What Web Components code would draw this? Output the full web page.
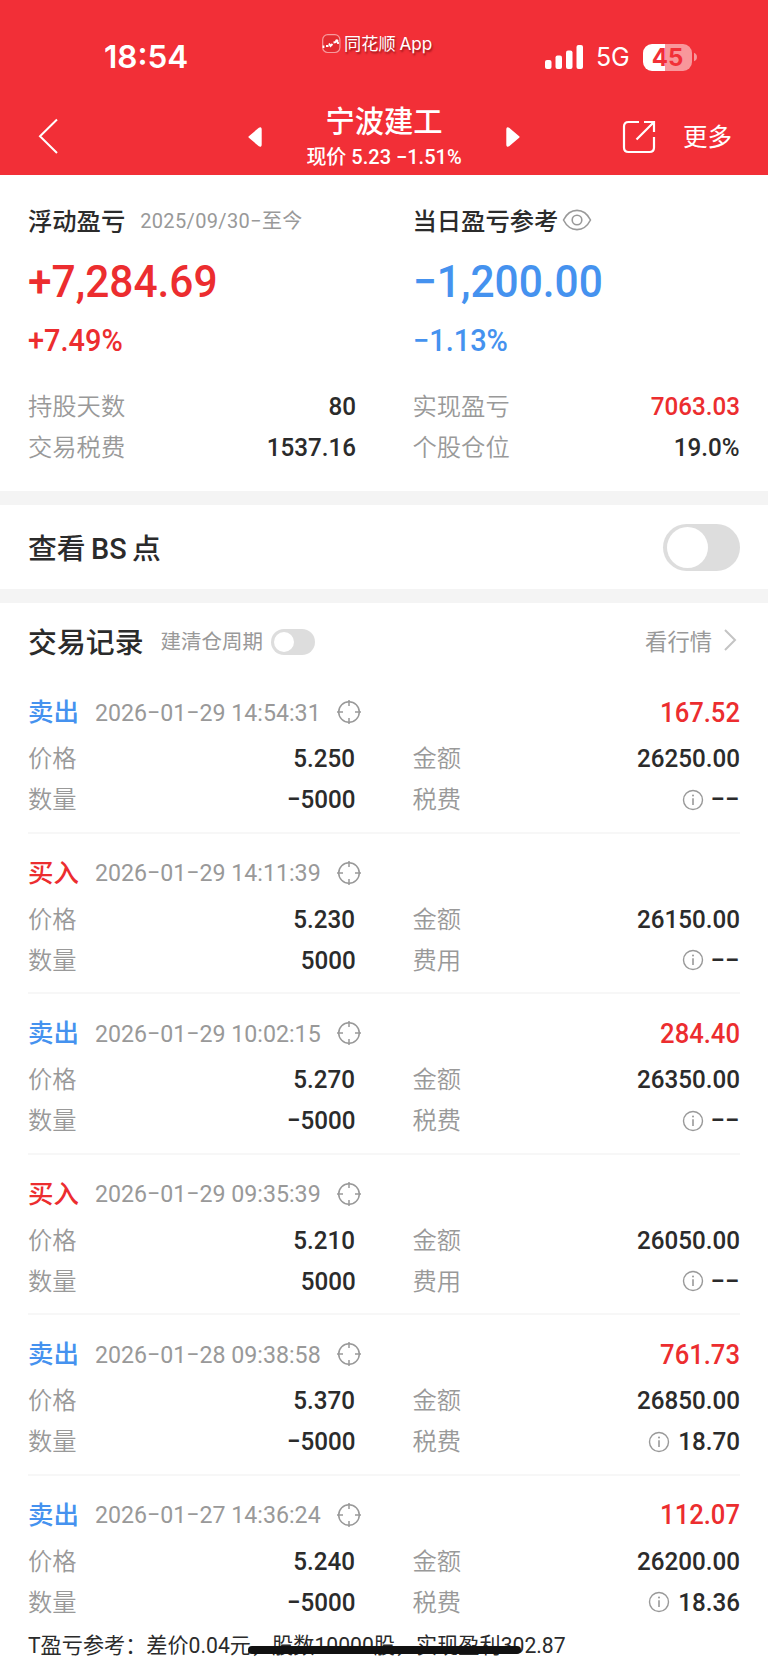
<!DOCTYPE html>
<html lang="zh-CN">
<head>
<meta charset="utf-8">
<meta name="viewport" content="width=device-width, initial-scale=1">
<title>宁波建工</title>
<style>
  body {
    margin: 0;
    background: #fff;
    color: #2b2b2b;
    font-family: Roboto, "Noto Sans CJK SC", sans-serif;
    --ink: #2b2b2b;
    --red: #ec2d2f;
    --blue: #4592ef;
    --gray: #999;
  }
</style>
</head>
<body>
<stock-page></stock-page>

<script>
class StatusBar extends HTMLElement {
    constructor() {
        super();
        this.attachShadow({ mode: 'open' });
        this.shadowRoot.innerHTML = `
        <style>
        :host {
            display: grid;
            grid-template-columns: 322px 1fr 223px;
            height: 94px;
            color: #fff;
            font-family: Inter, "Noto Sans CJK SC", sans-serif;
        }

        .time {
            padding: 39px 0 0 104px;
            font-size: 31.5px;
            line-height: 36px;
            font-weight: 600;
        }

        .app {
            display: flex;
            align-items: center;
            gap: 3px;
            height: 20px;
            margin-top: 34px;
            font-size: 17.2px;
            line-height: 20px;
            word-spacing: -1px;
            white-space: nowrap;
            text-shadow: 1px 2px 2px rgba(80,0,0,0.55);
        }

        .right {
            display: flex;
            align-items: center;
            height: 28px;
            margin-top: 43px;
        }

        .net {
            width: 47px;
            padding-left: 13px;
            box-sizing: border-box;
            font-size: 25px;
            line-height: 28px;
            letter-spacing: -0.3px;
        }

        .battery {
            margin-left: 13px;
            width: 49px;
            height: 27px;
            border-radius: 9px;
            background: linear-gradient(90deg, #fff 22px, #f8979b 22px);
            color: #f22f37;
            font-size: 24px;
            line-height: 27px;
            font-weight: 700;
            text-align: center;
        }
        </style>

        <div class="time">18:54</div>
        <div class="app">
            <svg width="19" height="20" viewBox="0 0 19 20">
                <rect x="0.7" y="0.7" width="17.2" height="17.8" rx="5" fill="#e32b31" stroke="#f79a9d" stroke-width="1.2"/>
                <path d="M1.5 11.5v2.5M4 12h2.500M7 9.500l1.500 2.500 2-2M11.500 8.500l2.500-.5M16 8v2" fill="none" stroke="#fff" stroke-width="1.8"/>
                <circle cx="14.8" cy="7" r="1.7" fill="#fff"/>
            </svg>
            <span>同花顺 App</span>
        </div>
        <div class="right">
            <svg width="38" height="24" viewBox="0 0 38 24" fill="#fff">
                <rect x="0" y="15" width="6.5" height="9" rx="2"/>
                <rect x="10.5" y="10.5" width="6.5" height="13.5" rx="2"/>
                <rect x="21" y="5.5" width="6.5" height="18.5" rx="2"/>
                <rect x="31.5" y="0" width="6.5" height="24" rx="2"/>
            </svg>
            <span class="net">5G</span>
            <span class="battery">45</span>
            <svg width="6" height="10" viewBox="0 0 6 10"><path d="M2 0.7a4.6 4.6 0 0 1 0 8.6z" fill="#f8979b"/></svg>
        </div>
        `;
    }
}

class NavBar extends HTMLElement {
    constructor() {
        super();
        this.attachShadow({ mode: 'open' });
        this.shadowRoot.innerHTML = `
        <style>
        :host {
            display: grid;
            grid-template-columns: 248px 272px 1fr;
            height: 81px;
            color: #fff;
        }

        .back {
            padding: 24px 0 0 38px;
        }

        .center {
            display: flex;
            justify-content: space-between;
        }

        .center svg {
            margin-top: 32px;
        }

        .title {
            text-align: center;
            white-space: nowrap;
        }

        h1 {
            margin: 10px 0 0;
            font-size: 29.3px;
            line-height: 36px;
            font-weight: 500;
        }

        .sub {
            font-size: 20px;
            line-height: 24px;
            margin-top: 5px;
            font-weight: 500;
        }

        .actions {
            display: flex;
            padding: 26px 0 0 102px;
        }

        .more {
            margin-left: 27px;
            font-size: 24.5px;
            line-height: 36px;
        }

        svg {
            display: block;
        }
        </style>

        <div class="back">
            <svg width="20" height="36" viewBox="0 0 20 36"><path d="M19 1.5L2 18.3 19 35" fill="none" stroke="#fff" stroke-width="2"/></svg>
        </div>
        <div class="center">
            <svg width="14" height="22" viewBox="0 0 14 22"><path d="M1.5 11L11.5 2.5Q12.7 1.7 12.7 3.5V18.5Q12.7 20.3 11.5 19.5Z" fill="#fff" stroke="#fff" stroke-width="2" stroke-linejoin="round"/></svg>
            <div class="title">
                <h1><slot name="title"></slot></h1>
                <div class="sub"><slot name="sub"></slot></div>
            </div>
            <svg width="14" height="22" viewBox="0 0 14 22"><path d="M12.5 11L2.5 2.5Q1.3 1.7 1.3 3.5V18.5Q1.3 20.3 2.5 19.5Z" fill="#fff" stroke="#fff" stroke-width="2" stroke-linejoin="round"/></svg>
        </div>
        <div class="actions">
            <svg width="34" height="34" viewBox="0 0 34 34" fill="none" stroke="#fff" stroke-width="2.2">
                <path d="M17 2H6.5Q2 2 2 6.5V27.5Q2 32 6.5 32H27.5Q32 32 32 27.5V17"/>
                <path d="M14.5 19.5L31.5 2.5M22 2H32V12"/>
            </svg>
            <span class="more">更多</span>
        </div>
        `;
    }
}

// <data-row label="..." info tone="red">value</data-row>
class DataRow extends HTMLElement {
    constructor() {
        super();
        this.attachShadow({ mode: 'open' });
    }

    connectedCallback() {
        const info = this.hasAttribute('info') ? `
            <svg width="22" height="22" viewBox="0 0 22 22" fill="none" stroke="#999">
                <circle cx="11" cy="11" r="9.5" stroke-width="1.4"/>
                <path d="M11 9.2V16" stroke-width="1.6"/>
                <circle cx="11" cy="6.5" r="1" fill="#999" stroke="none"/>
            </svg>` : '';
        this.shadowRoot.innerHTML = `
        <style>
        :host {
            display: flex;
            align-items: center;
            height: 41px;
            font-size: 24.3px;
            line-height: 41px;
            color: var(--ink);
        }

        .label {
            flex: 1;
            color: var(--gray);
            font-weight: 350;
        }

        svg {
            margin-right: 3px;
        }

        /* condensed figures */
        .value {
            font-size: 26.3px;
            font-weight: 500;
            transform: scaleX(0.92);
            transform-origin: right;
        }

        .value.dash {
            margin-left: 3px;
            transform: scaleX(0.98);
        }

        :host([tone="red"]) .value {
            color: var(--red);
        }
        </style>
        <span class="label">${this.getAttribute('label')}</span>
        ${info}
        <span class="value${this.textContent === '−−' ? ' dash' : ''}"><slot></slot></span>
        `;
    }
}

class ProfitCard extends HTMLElement {
    constructor() {
        super();
        this.attachShadow({ mode: 'open' });
        this.shadowRoot.innerHTML = `
        <style>
        :host {
            display: block;
            color: var(--red);
        }

        :host([tone="blue"]) {
            color: var(--blue);
        }

        .head {
            display: flex;
            align-items: center;
            height: 36px;
            font-size: 24.3px;
            font-weight: 500;
            color: var(--ink);
            white-space: nowrap;
        }

        .amount {
            margin-top: 19px;
            font-size: 45px;
            line-height: 52px;
            font-weight: 500;
            transform: scaleX(0.943);
            transform-origin: left;
        }

        .rate {
            margin: 15px 0 27px;
            font-size: 30.5px;
            line-height: 36px;
            font-weight: 500;
            transform: scaleX(0.948);
            transform-origin: left;
        }
        </style>
        <div class="head"><slot name="head"></slot></div>
        <div class="amount"><slot name="amount"></slot></div>
        <div class="rate"><slot name="rate"></slot></div>
        <slot></slot>
        `;
    }
}

class ToggleSwitch extends HTMLElement {
    constructor() {
        super();
        this.attachShadow({ mode: 'open' });
        this.shadowRoot.innerHTML = `
        <style>
        :host {
            display: block;
            box-sizing: border-box;
            width: 77px;
            height: 47px;
            padding: 3px 4px;
            border-radius: 24px;
            background: #ddd;
        }

        :host([small]) {
            width: 44px;
            height: 26px;
            padding: 3px;
        }

        i {
            display: block;
            height: 100%;
            aspect-ratio: 1;
            border-radius: 50%;
            background: #fff;
        }
        </style>
        <i></i>
        `;
    }
}

class TradeRecord extends HTMLElement {
    constructor() {
        super();
        this.attachShadow({ mode: 'open' });
    }

    connectedCallback() {
        const sell = this.getAttribute('side') === 'sell';
        const data = this.dataset;
        this.shadowRoot.innerHTML = `
        <style>
        :host {
            display: block;
            box-sizing: border-box;
            height: 160.5px;
            padding-top: 19px;
            border-bottom: 2px solid #f7f7f7;
        }

        :host(:last-of-type) {
            border-bottom-color: transparent;
        }

        header {
            display: flex;
            align-items: center;
            height: 40px;
            margin-bottom: 6px;
        }

        .side {
            width: 66.5px;
            font-size: 25.5px;
            line-height: 36px;
            font-weight: 500;
            color: ${sell ? 'var(--blue)' : 'var(--red)'};
        }

        time {
            flex: none;
            width: 241.5px;
            font-size: 24.7px;
            color: var(--gray);
            white-space: nowrap;
            transform: scaleX(0.938);
            transform-origin: left;
        }

        .profit {
            flex: 1;
            text-align: right;
            font-size: 28px;
            font-weight: 500;
            transform: scaleX(0.915);
            transform-origin: right;
            color: var(--red);
        }

        section {
            display: grid;
            grid-template-columns: 1fr 1fr;
            column-gap: 57px;
        }
        </style>
        <header>
            <span class="side">${sell ? '卖出' : '买入'}</span>
            <time>${data.time}</time>
            <svg width="26" height="26" viewBox="0 0 26 26" fill="none" stroke="#999" stroke-width="1.5">
                <circle cx="13" cy="13" r="10.3"/>
                <path d="M13 1V7M13 19V25M1 13H7M19 13H25"/>
            </svg>
            <span class="profit">${data.profit || ''}</span>
        </header>
        <section>
            <data-row label="价格">${data.price}</data-row>
            <data-row label="金额">${data.total}</data-row>
            <data-row label="数量">${sell ? '−' : ''}5000</data-row>
            <data-row label="${sell ? '税费' : '费用'}" info>${data.fee || '−−'}</data-row>
        </section>
        `;
    }
}

class StockPage extends HTMLElement {
    constructor() {
        super();
        this.attachShadow({ mode: 'open' });
        this.shadowRoot.innerHTML = `
        <style>
        :host {
            display: block;
            position: relative;
            height: 1669px;
            overflow: hidden;
        }

        .top {
            background: #f22f37;
        }

        .summary {
            display: grid;
            grid-template-columns: 1fr 1fr;
            column-gap: 57px;
            height: 316px;
            box-sizing: border-box;
            padding: 26px 28px 0;
        }

        .period {
            margin-left: 15px;
            font-size: 20px;
            letter-spacing: 0.35px;
            font-weight: 400;
            color: var(--gray);
        }

        .bs {
            display: flex;
            align-items: center;
            justify-content: space-between;
            height: 84px;
            padding: 0 28px;
            border: solid #f4f4f4;
            border-width: 14px 0;
            margin-top: 0;
            font-size: 28.8px;
            font-weight: 500;
            word-spacing: -1.8px;
        }

        .bs span {
            padding-bottom: 2px;
        }

        .bs {
            box-sizing: content-box;
        }

        .records-head {
            display: flex;
            align-items: center;
            height: 77px;
            padding: 0 28px;
        }

        h2 {
            margin: -4px 17px 0 0;
            font-size: 28.9px;
            font-weight: 500;
        }

        .cycle {
            margin: -3px 8px 0 0;
            font-size: 20.5px;
            color: var(--gray);
        }

        .quote {
            display: flex;
            align-items: center;
            gap: 12px;
            margin: -3px 0 0 auto;
            font-size: 22.3px;
            color: var(--gray);
        }

        .list {
            padding: 0 28px;
            margin-top: -7px;
        }

        .t-note {
            padding: 0 28px;
            font-size: 21.15px;
            line-height: 30px;
            margin-top: -5px;
            white-space: nowrap;
        }

        .home {
            position: absolute;
            left: 248px;
            top: 1646px;
            width: 273px;
            height: 8px;
            border-radius: 4px;
            background: #111;
        }
        </style>

        <div class="top">
            <status-bar></status-bar>
            <nav-bar>
                <span slot="title">宁波建工</span>
                <span slot="sub">现价 5.23 −1.51%</span>
            </nav-bar>
        </div>

        <div class="summary">
            <profit-card>
                <span slot="head">浮动盈亏</span>
                <span slot="head" class="period">2025/09/30−至今</span>
                <span slot="amount">+7,284.69</span>
                <span slot="rate">+7.49%</span>
                <data-row label="持股天数">80</data-row>
                <data-row label="交易税费">1537.16</data-row>
            </profit-card>
            <profit-card tone="blue">
                <span slot="head">当日盈亏参考</span>
                <svg slot="head" width="30" height="22" viewBox="0 0 30 22" style="margin: 1px 0 0 4px" fill="none" stroke="#999" stroke-width="1.6">
                    <path d="M1.5 11C8-1.8 22-1.8 28.5 11C22 23.8 8 23.8 1.5 11Z"/>
                    <circle cx="15" cy="11" r="4.8"/>
                </svg>
                <span slot="amount">−1,200.00</span>
                <span slot="rate">−1.13%</span>
                <data-row label="实现盈亏" tone="red">7063.03</data-row>
                <data-row label="个股仓位">19.0%</data-row>
            </profit-card>
        </div>

        <div class="bs"><span>查看 BS 点</span><toggle-switch></toggle-switch></div>

        <div class="records-head">
            <h2>交易记录</h2>
            <span class="cycle">建清仓周期</span>
            <toggle-switch small></toggle-switch>
            <span class="quote">看行情
                <svg width="16" height="22" viewBox="0 0 16 22"><path d="M1 1L11 11 1 21" fill="none" stroke="#c4c4c4" stroke-width="2"/></svg>
            </span>
        </div>

        <div class="list">
            <trade-record side="sell" data-time="2026−01−29 14:54:31" data-profit="167.52" data-price="5.250" data-total="26250.00"></trade-record>
            <trade-record side="buy" data-time="2026−01−29 14:11:39" data-price="5.230" data-total="26150.00"></trade-record>
            <trade-record side="sell" data-time="2026−01−29 10:02:15" data-profit="284.40" data-price="5.270" data-total="26350.00"></trade-record>
            <trade-record side="buy" data-time="2026−01−29 09:35:39" data-price="5.210" data-total="26050.00"></trade-record>
            <trade-record side="sell" data-time="2026−01−28 09:38:58" data-profit="761.73" data-price="5.370" data-total="26850.00" data-fee="18.70"></trade-record>
            <trade-record side="sell" data-time="2026−01−27 14:36:24" data-profit="112.07" data-price="5.240" data-total="26200.00" data-fee="18.36"></trade-record>
        </div>
        <div class="t-note">T盈亏参考：差价0.04元，股数10000股，实现盈利302.87</div>
        <div class="home"></div>
        `;
    }
}

customElements.define('status-bar', StatusBar);
customElements.define('nav-bar', NavBar);
customElements.define('data-row', DataRow);
customElements.define('profit-card', ProfitCard);
customElements.define('toggle-switch', ToggleSwitch);
customElements.define('trade-record', TradeRecord);
customElements.define('stock-page', StockPage);
</script>
</body>
</html>
